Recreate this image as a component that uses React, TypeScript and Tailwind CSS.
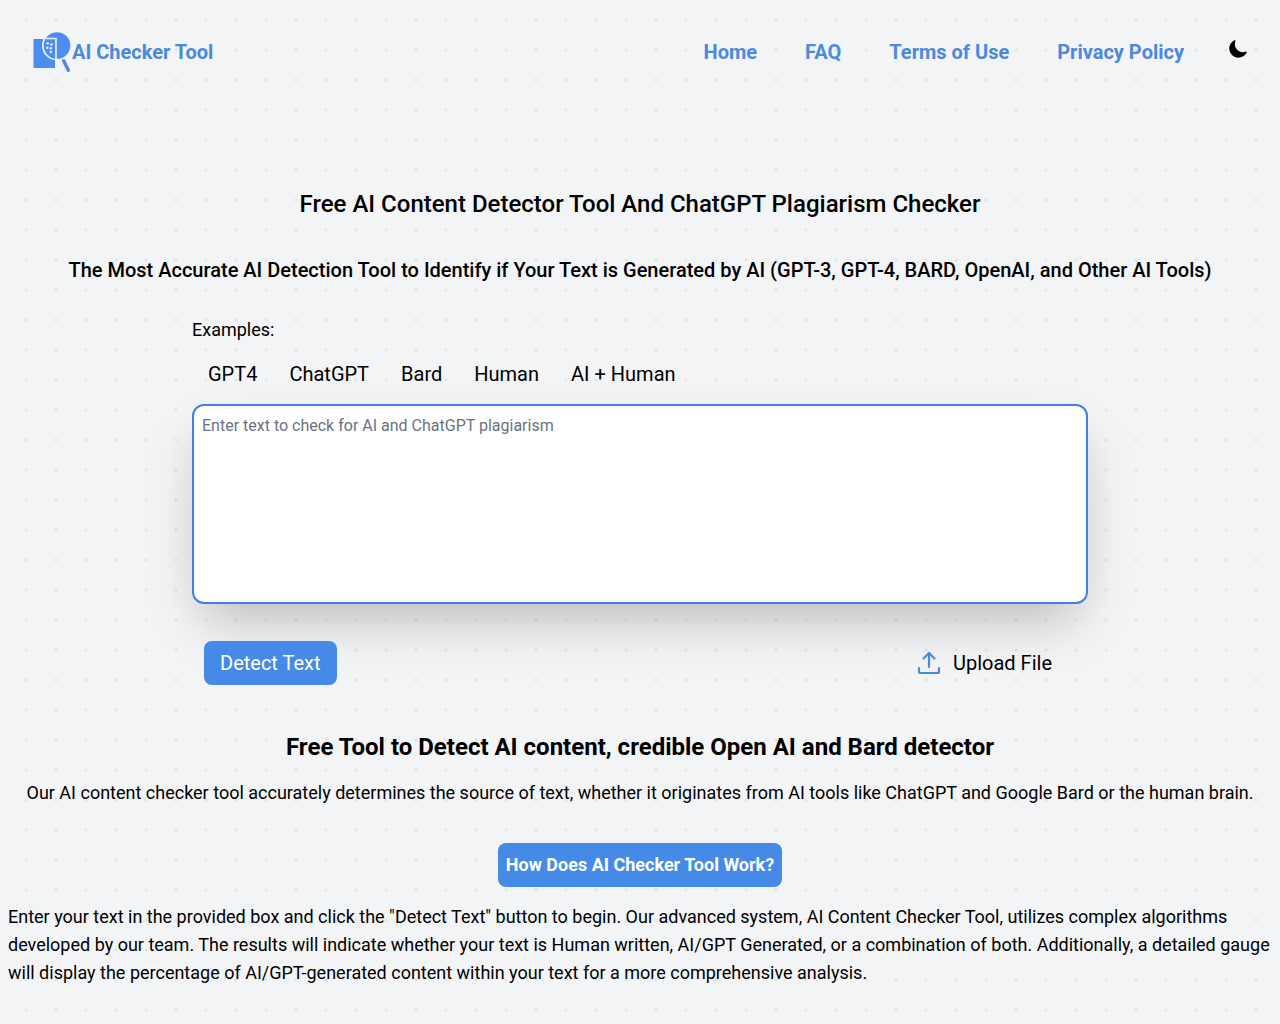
import { IoMoon } from "react-icons/io5";

const navLinks = ["Home", "FAQ", "Terms of Use", "Privacy Policy"];

const examples = ["GPT4", "ChatGPT", "Bard", "Human", "AI + Human"];

function Logo() {
  return (
    <svg width="40" height="40" viewBox="0 0 40 40" aria-hidden="true">
      <path d="M1.500 7h21.500v29H1.500z" fill="#4b8df0" />
      <circle cx="25" cy="13.500" r="15" fill="#f3f4f6" />
      <circle cx="25" cy="13.500" r="13.300" fill="#4b8df0" />
      <path d="M14 6.500h10v21" fill="none" stroke="#f3f4f6" strokeWidth="1.600" />
      <g fill="#f3f4f6">
        <circle cx="15.700" cy="11.300" r="1.200" />
        <circle cx="19.500" cy="12.500" r="1.200" />
        <circle cx="15.300" cy="15.700" r="1.200" />
        <circle cx="18.800" cy="16.200" r="1.200" />
        <circle cx="18.800" cy="20" r="1.200" />
      </g>
      <path d="M31.700 28.800l4.600 9.400" stroke="#5588ea" strokeWidth="3.500" strokeLinecap="round" />
    </svg>
  );
}

function UploadIcon() {
  return (
    <svg
      width="24"
      height="24"
      viewBox="0 0 24 24"
      fill="none"
      stroke="#4a89e0"
      strokeWidth="2.200"
      strokeLinecap="round"
      strokeLinejoin="round"
      aria-hidden="true"
    >
      <path d="M12 16V2.500M6.500 7.500L12 2l5.500 5.500" />
      <path d="M2 17v3.500a1.500 1.500 0 0 0 1.500 1.500h17a1.500 1.500 0 0 0 1.500-1.500V17" />
    </svg>
  );
}

function Header() {
  return (
    <header className="flex items-center justify-between p-8 text-xl font-bold text-[#4a89dc]">
      <a href="#home" className="flex items-center">
        <Logo />
        AI Checker Tool
      </a>
      <nav className="flex items-center gap-11">
        <div className="flex items-center gap-12">
          {navLinks.map((link) => (
            <a key={link} href="#home">
              {link}
            </a>
          ))}
        </div>
        <button type="button" aria-label="Toggle dark mode" className="mb-1.5 text-black">
          <IoMoon size={20} />
        </button>
      </nav>
    </header>
  );
}

function Detector() {
  return (
    <section className="mx-auto mt-8 w-full max-w-4xl">
      <p className="text-lg leading-7">Examples:</p>
      <div className="my-2 flex flex-wrap">
        {examples.map((example) => (
          <button key={example} type="button" className="px-4 py-2 text-xl">
            {example}
          </button>
        ))}
      </div>
      <textarea
        aria-label="Text to check"
        placeholder="Enter text to check for AI and ChatGPT plagiarism"
        className="block h-[200px] w-full resize-none rounded-xl border-2 border-[#4380e2] bg-white p-2 text-base shadow-2xl outline-none placeholder:text-gray-500"
      />
      <div className="mt-[37px] flex items-center justify-between pl-3 pr-9">
        <button type="button" className="rounded-lg bg-[#458ae6] px-4 py-2 text-xl text-white">
          Detect Text
        </button>
        <button type="button" className="flex items-center gap-3 py-2 text-xl">
          <UploadIcon />
          Upload File
        </button>
      </div>
    </section>
  );
}

export default function App() {
  return (
    <div className="min-h-screen bg-[#f3f4f6] bg-[radial-gradient(circle,#e1e3e6_1px,transparent_2px)] bg-[length:30px_30px] bg-[position:11px_5px] font-['Roboto',sans-serif] text-black">
      <Header />
      <main className="px-2 pt-21 pb-9">
        <h1 className="text-center text-2xl font-medium">
          Free AI Content Detector Tool And ChatGPT Plagiarism Checker
        </h1>
        <h2 className="mt-9 text-center text-xl font-medium">
          The Most Accurate AI Detection Tool to Identify if Your Text is Generated by AI (GPT-3, GPT-4, BARD, OpenAI, and
          Other AI Tools)
        </h2>
        <Detector />
        <section className="mt-[46px] text-lg leading-7">
          <h2 className="text-center text-2xl font-bold">
            Free Tool to Detect AI content, credible Open AI and Bard detector
          </h2>
          <p className="mt-4 text-center">
            Our AI content checker tool accurately determines the source of text, whether it originates from AI tools like
            ChatGPT and Google Bard or the human brain.
          </p>
          <div className="mt-9 mb-4 flex justify-center">
            <button type="button" className="rounded-lg bg-[#458ae6] p-2 font-bold text-white">
              How Does AI Checker Tool Work?
            </button>
          </div>
          <p>
            Enter your text in the provided box and click the "Detect Text" button to begin. Our advanced system, AI Content
            Checker Tool, utilizes complex algorithms developed by our team. The results will indicate whether your text is
            Human written, AI/GPT Generated, or a combination of both. Additionally, a detailed gauge will display the
            percentage of AI/GPT-generated content within your text for a more comprehensive analysis.
          </p>
        </section>
      </main>
    </div>
  );
}
